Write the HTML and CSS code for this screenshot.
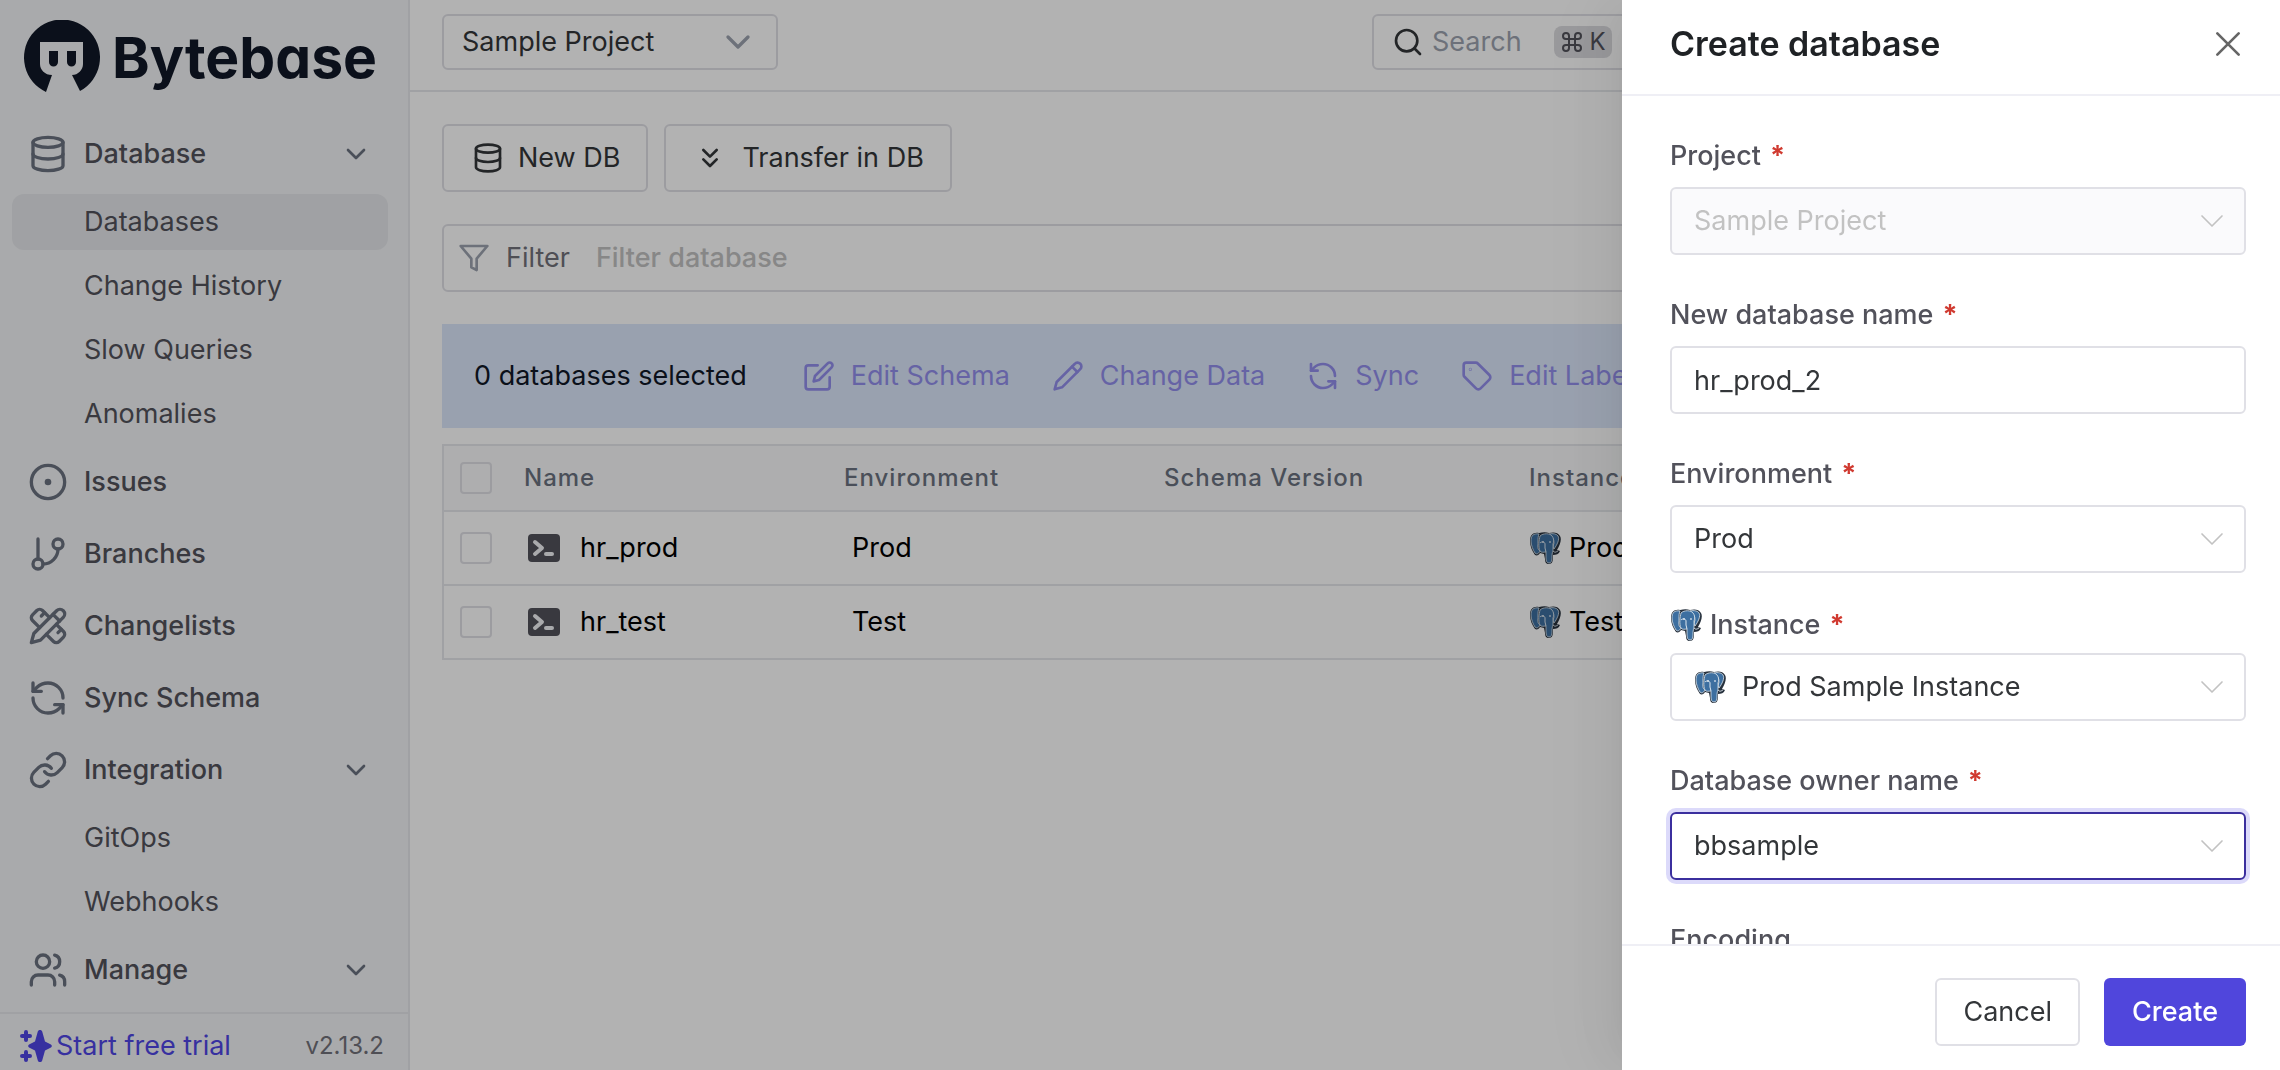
FILE: index.html
```
<!DOCTYPE html>
<html lang="en">
<head>
    <meta charset="UTF-8">
    <title>Bytebase</title>
    <link rel="stylesheet" href="styles.css">
</head>
<body>
<!-- icons -->
<svg class="sprite" aria-hidden="true">
    <symbol id="i-db" viewBox="0 0 24 24"><ellipse cx="12" cy="5" rx="9" ry="3"/><path d="M3 5v14a9 3 0 0 0 18 0V5"/><path d="M3 12a9 3 0 0 0 18 0"/></symbol>
    <symbol id="i-down" viewBox="0 0 24 24"><path d="m6 9 6 6 6-6"/></symbol>
    <symbol id="i-downs" viewBox="0 0 24 24"><path d="m7 6 5 5 5-5"/><path d="m7 13 5 5 5-5"/></symbol>
    <symbol id="i-issue" viewBox="0 0 24 24"><circle cx="12" cy="12" r="10"/><circle cx="12" cy="12" r="1"/></symbol>
    <symbol id="i-branch" viewBox="0 0 24 24"><path d="M6 3v12"/><circle cx="18" cy="6" r="3"/><circle cx="6" cy="18" r="3"/><path d="M18 9a9 9 0 0 1-9 9"/></symbol>
    <symbol id="i-tools" viewBox="0 0 24 24"><path d="m15 5 4 4"/><path d="M13 7 8.7 2.7a2.41 2.41 0 0 0-3.4 0L2.7 5.3a2.41 2.41 0 0 0 0 3.4L7 13"/><path d="m8 6 2-2"/><path d="m2 22 5.5-1.5L21.17 6.83a2.82 2.82 0 0 0-4-4L3.5 16.5Z"/><path d="m18 16 2-2"/><path d="m17 11 4.3 4.3c.94.94.94 2.46 0 3.4l-2.6 2.6c-.94.94-2.46.94-3.4 0L11 17"/></symbol>
    <symbol id="i-sync" viewBox="0 0 24 24"><path d="M21 12a9 9 0 0 0-9-9 9.75 9.75 0 0 0-6.74 2.74L3 8"/><path d="M3 3v5h5"/><path d="M3 12a9 9 0 0 0 9 9 9.75 9.75 0 0 0 6.74-2.74L21 16"/><path d="M16 16h5v5"/></symbol>
    <symbol id="i-link" viewBox="0 0 24 24"><path d="M10 13a5 5 0 0 0 7.54.54l3-3a5 5 0 0 0-7.07-7.07l-1.72 1.71"/><path d="M14 11a5 5 0 0 0-7.54-.54l-3 3a5 5 0 0 0 7.07 7.07l1.71-1.71"/></symbol>
    <symbol id="i-users" viewBox="0 0 24 24"><path d="M16 21v-2a4 4 0 0 0-4-4H6a4 4 0 0 0-4 4v2"/><circle cx="9" cy="7" r="4"/><path d="M22 21v-2a4 4 0 0 0-3-3.87"/><path d="M16 3.13a4 4 0 0 1 0 7.75"/></symbol>
    <symbol id="i-search" viewBox="0 0 24 24"><circle cx="11" cy="11" r="8"/><path d="m21 21-4.3-4.3"/></symbol>
    <symbol id="i-funnel" viewBox="0 0 24 24"><path d="M22 3H2l8 9.46V19l4 2v-8.54L22 3z"/></symbol>
    <symbol id="i-edit" viewBox="0 0 24 24"><path d="M11 4H4a2 2 0 0 0-2 2v14a2 2 0 0 0 2 2h14a2 2 0 0 0 2-2v-7"/><path d="M18.5 2.5a2.12 2.12 0 0 1 3 3L12 15l-4 1 1-4Z"/></symbol>
    <symbol id="i-pencil" viewBox="0 0 24 24"><path d="M17 3a2.85 2.83 0 1 1 4 4L7.5 20.5 2 22l1.5-5.5Z"/><path d="m15 5 4 4"/></symbol>
    <symbol id="i-tag" viewBox="0 0 24 24"><path d="M12.586 2.586A2 2 0 0 0 11.172 2H4a2 2 0 0 0-2 2v7.172a2 2 0 0 0 .586 1.414l8.704 8.704a2.426 2.426 0 0 0 3.42 0l6.58-6.58a2.426 2.426 0 0 0 0-3.42z"/><circle cx="7" cy="7" r=".2"/></symbol>
    <symbol id="i-close" viewBox="0 0 24 24"><path d="M4 4l16 16M20 4 4 20"/></symbol>
    <symbol id="i-cmd" viewBox="0 0 24 24"><path d="M15 6v12a3 3 0 1 0 3-3H6a3 3 0 1 0 3 3V6a3 3 0 1 0-3 3h12a3 3 0 1 0-3-3"/></symbol>
    <symbol id="i-terminal" viewBox="0 0 32 28"><rect width="32" height="28" rx="4" fill="#52525b"/><path d="m7 8 7 6-7 6" fill="none" stroke="#f3f4f6" stroke-width="4" stroke-linecap="round" stroke-linejoin="round"/><path d="M18 20h6" stroke="#f3f4f6" stroke-width="4" stroke-linecap="round"/></symbol>
    <symbol id="i-sparkles" viewBox="0 0 32 32">
        <path d="M17.800 1.500c.6-2 3.800-2 4.400 0L25 11.500l5.500 2.800c1.800.9 1.800 2.500 0 3.400L25 20.500l-2.800 10c-.6 2-3.800 2-4.400 0L15 20.500l-5.500-2.800c-1.800-.9-1.800-2.500 0-3.400L15 11.500Z"/>
        <path d="M6 2v8M2 6h8M6 22v8M2 26h8" stroke="currentColor" stroke-width="4" stroke-linecap="round"/>
    </symbol>
    <symbol id="i-pg" viewBox="0 0 32 32">
        <path d="M10 1C4 0 1 3 1 9c0 5 2 10 5 14 2 1 4 0 5-2l4 1 1 5c0 3 1 5 4 5s4-3 4-6v-3c3 0 6-1 7-4l-3-1c3-5 5-11 3-14-2-4-7-4-11-3-3-1-6-1-10 0Z" fill="#27313d"/>
        <path d="M10 2C4 1 2 4 2 9c0 4 2 9 4 12 2 2 4 0 5-2-3-2-2-5-2-9 0-3 0-6 1-8Z" fill="#3d6fa0" stroke="#dde7ef" stroke-width=".8"/>
        <path d="M20 2c4-1 8 0 9 2 2 3-1 9-4 13-1-1-1-3 0-6 0-4-2-7-5-9Z" fill="#3d6fa0" stroke="#dde7ef" stroke-width=".8"/>
        <path d="M11 4c3-3 10-3 12 0 2 2 2 6 1 8v7c-1 2-1 4-1 7 0 3-1 5-3 5s-3-2-3-5v-6c-2 0-5 1-6-1-2-4-1-11 0-15Z" fill="#3d6fa0" stroke="#dde7ef" stroke-width=".8"/>
        <path d="M11 11c2-2 5-1 5 1v4l1 4M24 19c2 2 3 1 5 0" fill="none" stroke="#dde7ef"/>
        <path d="M13 10h2M20 10h2" stroke="#fff"/>
    </symbol>
</svg>

<div class="app">
    <aside class="sidebar">
        <a class="logo" href="#">
            <svg viewBox="0 0 76 76">
                <circle cx="38" cy="38" r="38" fill="#f3f4f6"/>
                <path d="M22 72A38 38 0 1 1 56 71L48 55c6 0 11-5 11-11V22H16v22c0 6 5 11 12 11Z" fill="#111827"/>
                <path d="M25 31h9v11a4.500 4.500 0 0 1-9 0ZM43 31h9v11a4.500 4.500 0 0 1-9 0Z" fill="#111827"/>
            </svg>
            <span>Bytebase</span>
        </a>
        <nav class="nav">
            <a class="item" href="#"><svg class="icon"><use href="#i-db"/></svg><span>Database</span><svg class="icon arrow"><use href="#i-down"/></svg></a>
            <a class="sub selected" href="#">Databases</a>
            <a class="sub" href="#">Change History</a>
            <a class="sub" href="#">Slow Queries</a>
            <a class="sub" href="#">Anomalies</a>
            <a class="item" href="#"><svg class="icon"><use href="#i-issue"/></svg><span>Issues</span></a>
            <a class="item" href="#"><svg class="icon"><use href="#i-branch"/></svg><span>Branches</span></a>
            <a class="item" href="#"><svg class="icon"><use href="#i-tools"/></svg><span>Changelists</span></a>
            <a class="item" href="#"><svg class="icon"><use href="#i-sync"/></svg><span>Sync Schema</span></a>
            <a class="item" href="#"><svg class="icon"><use href="#i-link"/></svg><span>Integration</span><svg class="icon arrow"><use href="#i-down"/></svg></a>
            <a class="sub" href="#">GitOps</a>
            <a class="sub" href="#">Webhooks</a>
            <a class="item" href="#"><svg class="icon"><use href="#i-users"/></svg><span>Manage</span><svg class="icon arrow"><use href="#i-down"/></svg></a>
        </nav>
        <div class="side-foot">
            <a class="trial" href="#"><svg><use href="#i-sparkles"/></svg>Start free trial</a>
            <span class="version">v2.13.2</span>
        </div>
    </aside>

    <div class="page">
        <header class="topbar">
            <button class="project" type="button">Sample Project<svg class="icon"><use href="#i-down"/></svg></button>
            <button class="search" type="button">
                <svg class="icon"><use href="#i-search"/></svg>
                <span>Search</span>
                <kbd><svg class="icon"><use href="#i-cmd"/></svg>K</kbd>
            </button>
        </header>
        <main class="content">
            <div class="buttons">
                <button class="btn" type="button"><svg class="icon"><use href="#i-db"/></svg>New DB</button>
                <button class="btn btn-wide" type="button"><svg class="icon"><use href="#i-downs"/></svg>Transfer in DB</button>
            </div>
            <div class="filter">
                <svg class="icon"><use href="#i-funnel"/></svg>
                <label for="filter">Filter</label>
                <input id="filter" type="text" placeholder="Filter database">
            </div>
            <div class="actions">
                <span class="count">0 databases selected</span>
                <button type="button" disabled><svg class="icon"><use href="#i-edit"/></svg>Edit Schema</button>
                <button type="button" disabled><svg class="icon"><use href="#i-pencil"/></svg>Change Data</button>
                <button type="button" disabled><svg class="icon"><use href="#i-sync"/></svg>Sync</button>
                <button type="button" disabled><svg class="icon"><use href="#i-tag"/></svg>Edit Labels</button>
            </div>
            <table class="list">
                <colgroup>
                    <col class="c-check"><col class="c-name"><col class="c-env"><col class="c-schema"><col>
                </colgroup>
                <thead>
                <tr>
                    <th><input type="checkbox" aria-label="Select all"></th>
                    <th>Name</th>
                    <th>Environment</th>
                    <th>Schema Version</th>
                    <th>Instance</th>
                </tr>
                </thead>
                <tbody>
                <tr>
                    <td><input type="checkbox" aria-label="Select hr_prod"></td>
                    <td><div class="db"><svg><use href="#i-terminal"/></svg>hr_prod</div></td>
                    <td><div class="env">Prod</div></td>
                    <td></td>
                    <td><div class="inst"><svg><use href="#i-pg"/></svg>Prod</div></td>
                </tr>
                <tr>
                    <td><input type="checkbox" aria-label="Select hr_test"></td>
                    <td><div class="db"><svg><use href="#i-terminal"/></svg>hr_test</div></td>
                    <td><div class="env">Test</div></td>
                    <td></td>
                    <td><div class="inst"><svg><use href="#i-pg"/></svg>Test</div></td>
                </tr>
                </tbody>
            </table>
        </main>
    </div>
</div>

<div class="mask"></div>
<form class="drawer">
    <div class="drawer-head">
        <h2>Create database</h2>
        <button class="close" type="button" aria-label="Close"><svg class="icon"><use href="#i-close"/></svg></button>
    </div>
    <div class="drawer-body">
        <div class="field">
            <label for="project">Project <em>*</em></label>
            <div class="control">
                <select id="project" disabled><option>Sample Project</option></select>
                <svg class="icon caret"><use href="#i-down"/></svg>
            </div>
        </div>
        <div class="field">
            <label for="name">New database name <em>*</em></label>
            <div class="control"><input id="name" type="text" value="hr_prod_2"></div>
        </div>
        <div class="field">
            <label for="env">Environment <em>*</em></label>
            <div class="control">
                <select id="env"><option>Prod</option><option>Test</option></select>
                <svg class="icon caret"><use href="#i-down"/></svg>
            </div>
        </div>
        <div class="field tight">
            <label for="instance"><svg class="pg"><use href="#i-pg"/></svg>Instance <em>*</em></label>
            <div class="control with-icon">
                <svg class="pg"><use href="#i-pg"/></svg>
                <select id="instance"><option>Prod Sample Instance</option></select>
                <svg class="icon caret"><use href="#i-down"/></svg>
            </div>
        </div>
        <div class="field">
            <label for="owner">Database owner name <em>*</em></label>
            <div class="control">
                <select id="owner" class="active"><option>bbsample</option></select>
                <svg class="icon caret"><use href="#i-down"/></svg>
            </div>
        </div>
        <div class="field">
            <label for="encoding">Encoding</label>
            <div class="control"><input id="encoding" type="text"></div>
        </div>
    </div>
    <div class="drawer-foot">
        <button class="cancel" type="button">Cancel</button>
        <button class="create" type="submit">Create</button>
    </div>
</form>
</body>
</html>
```

FILE: styles.css
```
*{
    margin: 0;
    padding: 0;
    box-sizing: border-box;
}
body{
    font: 27px/40px Inter, "Liberation Sans", sans-serif;
    color: #333639;
    background: white;
}
a{
    color: inherit;
    text-decoration: none;
}
button,input,select{
    font: inherit;
    color: inherit;
    background: none;
    border: none;
    outline: none;
}
svg{
    flex: none;
}
.sprite{
    position: absolute;
    width: 0;
    height: 0;
}
.icon{
    width: 32px;
    height: 32px;
    fill: none;
    stroke: currentColor;
    stroke-width: 2;
    stroke-linecap: round;
    stroke-linejoin: round;
}
.app{
    display: flex;
    height: 100vh;
    overflow: hidden;
}
/*sidebar*/
.sidebar{
    width: 410px;
    flex: none;
    display: flex;
    flex-direction: column;
    background: #f3f4f6;
    border-right: 2px solid #e5e7eb;
}
.logo{
    display: flex;
    align-items: center;
    gap: 12px;
    height: 116px;
    padding: 0 24px;
    color: #111827;
    font-size: 57px;
    font-weight: 700;
    font-feature-settings: "cv11";
}
.logo svg{
    width: 76px;
    height: 76px;
}
.nav{
    flex: 1;
    display: flex;
    flex-direction: column;
    gap: 8px;
    padding: 6px 20px 0 12px;
    overflow: hidden;
    color: #52525b;
}
.item{
    display: flex;
    align-items: center;
    gap: 16px;
    height: 64px;
    flex: none;
    padding: 0 16px;
    font-weight: 500;
}
.item .icon{
    width: 40px;
    height: 40px;
    color: #6b7280;
}
.item .arrow{
    width: 32px;
    height: 32px;
    margin-left: auto;
}
.sub{
    height: 56px;
    flex: none;
    padding-left: 72px;
    line-height: 56px;
    border-radius: 12px;
}
.sub.selected{
    background: #e5e7eb;
}
.side-foot{
    display: flex;
    align-items: center;
    justify-content: space-between;
    height: 58px;
    padding: 8px 24px 0 20px;
    border-top: 2px solid #e5e7eb;
}
.trial{
    display: flex;
    align-items: center;
    gap: 4px;
    color: #4f46e5;
}
.trial svg{
    width: 32px;
    height: 32px;
    fill: currentColor;
}
.version{
    font-size: 24px;
    color: #71717a;
}
/*top bar*/
.page{
    flex: 1;
    min-width: 0;
}
.topbar{
    display: flex;
    justify-content: space-between;
    padding: 14px 32px 20px;
    border-bottom: 2px solid #e5e7eb;
}
.topbar button{
    display: flex;
    align-items: center;
    height: 56px;
    border: 2px solid #e0e0e6;
    border-radius: 6px;
}
.project{
    width: 336px;
    justify-content: space-between;
    padding: 0 18px;
}
.project .icon{
    width: 40px;
    height: 40px;
    color: #9ca3af;
}
.search{
    width: 876px;
    gap: 8px;
    padding: 0 18px;
}
.search span{
    color: #9ca3af;
}
.search kbd{
    display: flex;
    align-items: center;
    gap: 6px;
    height: 32px;
    margin-left: 24px;
    padding: 0 6px;
    font: 24px/32px Inter, sans-serif;
    color: #52525b;
    background: #dbdbdf;
    border-radius: 8px;
}
.search kbd .icon{
    width: 24px;
    height: 24px;
}
/*main*/
.content{
    padding: 32px;
}
.buttons{
    display: flex;
    gap: 16px;
    margin-bottom: 32px;
}
.btn{
    display: flex;
    align-items: center;
    gap: 14px;
    height: 68px;
    padding: 0 26px 0 28px;
    border: 2px solid #e0e0e6;
    border-radius: 6px;
}
.btn-wide{
    gap: 16px;
}
.filter{
    display: flex;
    align-items: center;
    height: 68px;
    margin-bottom: 32px;
    padding: 0 14px;
    border: 2px solid #e0e0e6;
    border-radius: 6px;
}
.filter .icon{
    color: #9ca3af;
}
.filter label{
    margin: 0 26px 0 16px;
    color: #71717a;
}
.filter input{
    flex: 1;
    font-weight: 500;
}
.filter input::placeholder{
    color: #c2c2c2;
}
.actions{
    display: flex;
    align-items: center;
    gap: 42px;
    height: 104px;
    margin-bottom: 16px;
    padding: 0 32px;
    background: #dce7fb;
    overflow: hidden;
    white-space: nowrap;
}
.count{
    margin-right: 14px;
    color: #111827;
}
.actions button{
    display: flex;
    align-items: center;
    gap: 16px;
    color: #938fec;
}
.list{
    width: 100%;
    table-layout: fixed;
    border-collapse: collapse;
    border: 2px solid #e5e7eb;
}
.c-check{
    width: 65px;
}
.c-name,.c-env{
    width: 320px;
}
.c-schema{
    width: 365px;
}
.list tr{
    border-bottom: 2px solid #e5e7eb;
}
.list th,.list td{
    height: 74px;
    padding-left: 16px;
    text-align: left;
    vertical-align: middle;
    color: black;
}
.list th{
    height: 66px;
    font-size: 24px;
    font-weight: 500;
    letter-spacing: 1px;
    color: #6b7280;
    background: #f9fafb;
}
.list input{
    display: block;
    appearance: none;
    width: 32px;
    height: 32px;
    border: 2px solid #e0e0e6;
    border-radius: 4px;
}
.db,.inst{
    display: flex;
    align-items: center;
    white-space: nowrap;
}
.db{
    gap: 20px;
    padding-left: 4px;
}
.db svg{
    width: 32px;
    height: 28px;
}
.env{
    padding-left: 8px;
}
.inst{
    gap: 8px;
}
.inst svg,.pg{
    width: 32px;
    height: 32px;
}
/*drawer*/
.mask{
    position: fixed;
    inset: 0;
    background: rgba(0, 0, 0, .3);
}
.drawer{
    position: fixed;
    top: 0;
    right: 0;
    bottom: 0;
    width: 658px;
    display: flex;
    flex-direction: column;
    background: white;
    box-shadow: -12px 0 32px -18px rgba(0, 0, 0, .08), -18px 0 56px 0 rgba(0, 0, 0, .05), -24px 0 96px 32px rgba(0, 0, 0, .02);
}
.drawer-head{
    display: flex;
    align-items: center;
    justify-content: space-between;
    height: 96px;
    flex: none;
    padding: 0 34px 6px 48px;
    border-bottom: 2px solid #efeff5;
}
.drawer-head h2{
    font-size: 34px;
    font-weight: 600;
    color: #1f2225;
}
.close{
    display: flex;
    padding: 2px;
    color: #666;
}
.drawer-body{
    flex: 1;
    min-height: 0;
    padding: 0 34px 0 48px;
    overflow: hidden;
}
.field{
    margin-top: 40px;
}
.field label{
    display: flex;
    align-items: center;
    margin-bottom: 11px;
    font-weight: 500;
    color: #52525b;
}
.field em{
    margin-left: 9px;
    font-style: normal;
    font-weight: 700;
    color: #d03a30;
}
.field.tight{
    margin-top: 32px;
}
.field.tight label{
    margin-bottom: 8px;
}
label .pg{
    margin-right: 8px;
}
.control{
    position: relative;
}
.control select,.control input{
    display: block;
    appearance: none;
    width: 100%;
    height: 68px;
    padding: 0 22px;
    border: 2px solid #e0e0e6;
    border-radius: 6px;
}
.control select:disabled{
    color: #c2c2c2;
    background: #fafafc;
    opacity: 1;
}
.control select.active{
    border-color: #3b2f9e;
    box-shadow: 0 0 0 4px rgba(79, 70, 229, .2);
}
.control.with-icon select{
    padding-left: 70px;
}
.control .pg{
    position: absolute;
    left: 24px;
    top: 18px;
}
.caret{
    position: absolute;
    right: 14px;
    top: 14px;
    width: 40px;
    height: 40px;
    color: #c2c2c2;
    stroke-width: 1;
}
.drawer-foot{
    display: flex;
    justify-content: flex-end;
    gap: 24px;
    flex: none;
    padding: 32px 34px 24px;
    border-top: 2px solid #efeff5;
}
.drawer-foot button{
    height: 68px;
    padding: 0 28px;
    border-radius: 6px;
}
.drawer-foot .cancel{
    padding: 0 26px;
    border: 2px solid #e0e0e6;
}
.drawer-foot .create{
    font-weight: 500;
    color: white;
    background: #5046dc;
}
```
